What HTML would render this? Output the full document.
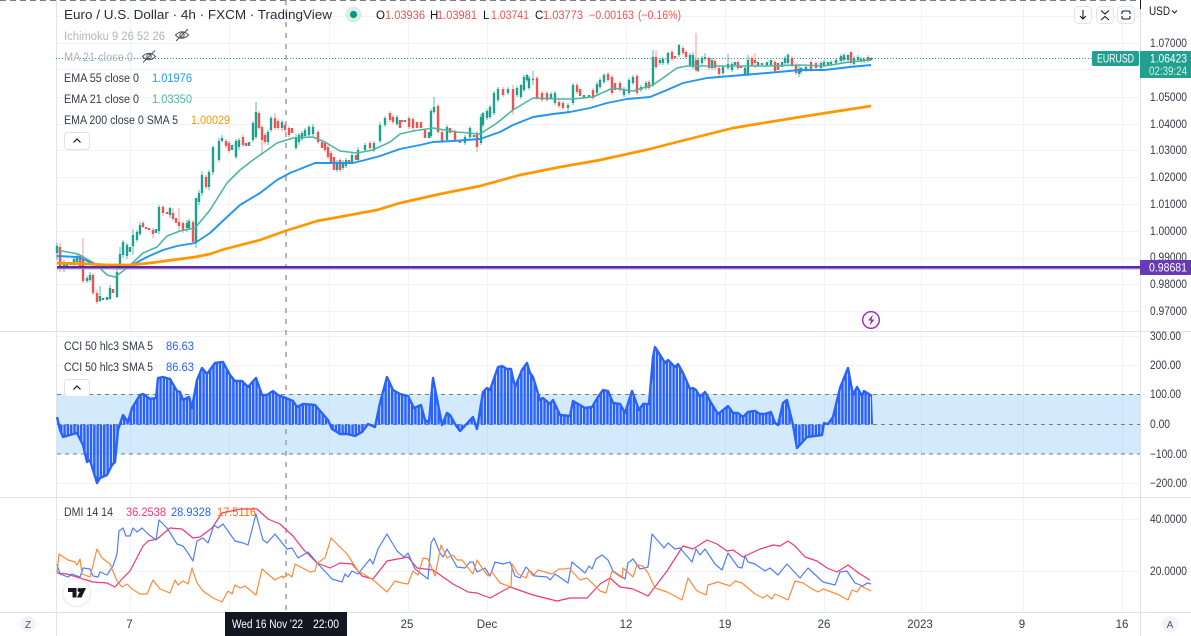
<!DOCTYPE html>
<html><head><meta charset="utf-8"><style>
html,body{margin:0;padding:0;background:#fff;width:1191px;height:636px;overflow:hidden}
svg{display:block;filter:blur(.3px)}
text{font-family:"Liberation Sans",sans-serif;font-size:11.5px;fill:#131722}
.ax text{fill:#363a45;font-size:11.5px}
</style></head><body>
<svg width="1191" height="636" viewBox="0 0 1191 636" xmlns="http://www.w3.org/2000/svg">
<defs>
<pattern id="bars" x="56.7" y="0" width="3.31" height="10" patternUnits="userSpaceOnUse"><rect width="2.6" height="10" fill="#2962ff"/><rect x="2.6" width=".71" height="10" fill="#fff" opacity=".55"/></pattern>
</defs>
<rect width="1191" height="636" fill="#fff"/>
<!-- grid -->
<path fill="none" stroke="#f0f3fa" stroke-width="1" d="M130.5 0V612M229.5 0V612M329.5 0V612M408.5 0V612M487.5 0V612M626.5 0V612M725.5 0V612M824.5 0V612M921.5 0V612M1023.5 0V612M1122.5 0V612
M56 16.5H1140M56 43.5H1140M56 69.5H1140M56 97.5H1140M56 124.5H1140M56 150.5H1140M56 177.5H1140M56 204.5H1140M56 231.5H1140M56 258.5H1140M56 284.5H1140M56 311.5H1140
M56 336.5H1140M56 365.5H1140M56 394.5H1140M56 483.5H1140
M56 519.5H1140M56 571.5H1140"/>
<!-- CCI band -->
<rect x="57" y="394.5" width="1083" height="59.5" fill="#2196f3" opacity=".2"/>
<!-- separators -->
<path fill="none" stroke="#e0e3eb" stroke-width="1" d="M56.5 0V636M1140.5 0V636M0 331.5H1191M0 497.5H1191M0 612.5H1191"/>
<!-- top dashed -->
<path stroke="#787b86" stroke-width="1" stroke-dasharray="6 4" d="M0 .5H1140"/>
<path stroke="#131722" stroke-width="1" d="M1140.5 0V9"/>
<!-- crosshair -->
<path stroke="#9598a1" stroke-width="1.4" stroke-dasharray="5 6" d="M286 0V612"/>
<!-- last price dotted -->
<path stroke="#22a08f" stroke-width="1" stroke-dasharray="1 2" d="M56 58.5H1092"/>
<!-- wicks -->
<g fill="none" stroke-width="1">
<path stroke="#22a08f" opacity=".75" d="M57 243V260M64 260V272M74 257V267M77 253V265M87 276V283M90 272V282M100 286V302M110 285V300M117 268V298M120 247V270M123 240V258M127 243V259M133 229V255M137 230V242M140 222V236M159 205V234M170 207V218M187 220V232M189 219V230M196 198V248M199 190V205M202 171V196M209 170V190M213 146V175M219 138V162M222 135V142M236 139V159M239 138V150M253 121V142M256 102V139M268 130V145M271 116V132M282 120V131M296 134V150M299 133V145M302 131V141M305 128V138M309 125V137M313 124V136M337 160V172M343 160V170M346 158V168M352 153V164M358 147V161M365 143V152M374 141V152M380 122V143M385 116V127M397 115V126M431 109V138M434 97V114M447 125V142M465 135V145M470 126V139M481 114V145M483 112V127M487 109V120M490 105V119M494 91V115M498 87V102M508 87V95M517 86V97M521 84V99M524 75V92M527 74V82M529 76V90M533 71V85M551 92V98M555 91V105M568 103V112M573 83V105M597 82V95M600 78V89M604 73V84M624 87V97M629 78V95M633 75V85M641 85V92M646 81V90M653 50V87M660 58V65M663 57V65M668 52V65M679 44V57M690 53V67M693 52V69M698 58V72M702 56V65M705 53V61M712 58V70M723 65V75M728 54V70M732 62V72M745 66V76M748 55V76M785 56V65M788 53V65M799 65V77M801 67V74M806 65V72M821 61V70M824 60V67M831 60V66M836 58V65M841 54V63M844 53V62M848 54V62M854 56V67M858 55V62M861 57V63M864 57V63M871 57V61"/>
<path stroke="#ef5350" opacity=".6" d="M60 243V272M83 238V283M93 273V295M97 290V304M143 221V228M153 228V238M163 205V216M173 208V221M179 208V232M183 221V233M193 220V244M206 175V189M226 139V148M229 141V153M243 135V147M259 111V130M262 125V155M265 133V144M275 113V130M278 119V130M285 123V132M289 126V137M318 130V144M325 141V152M328 145V159M331 151V164M340 158V172M370 141V150M390 111V122M393 115V124M409 116V129M413 117V130M438 104V134M442 130V143M455 130V142M477 131V152M503 87V97M513 85V115M537 76V100M542 91V102M547 91V102M559 100V108M563 101V110M577 83V94M593 88V100M608 72V82M612 75V95M620 81V92M637 74V95M649 80V90M656 50V69M672 50V61M683 46V55M686 50V59M696 33V72M709 56V70M715 59V70M719 66V76M738 60V70M752 56V67M755 53V68M775 60V73M792 56V67M796 63V75M811 60V72M816 61V69M851 52V65M868 55V63"/>
</g>
<!-- bodies green -->
<path fill="none" stroke="#1ea08e" stroke-width="2.4" d="M57 246V253M64 262V267M67 263V266M74 259V265M77 256V262M87 278V281M90 275V280M100 296V301M103 298V300M107 297V300M110 288V299M117 272V297M120 254V267M123 242V255M127 245V256M130 247V252M133 235V246M137 232V240M140 225V234M156 229V233M159 207V231M170 208V215M187 223V228M189 221V228M196 198V243M199 193V202M202 175V193M209 172V187M213 147V172M219 141V160M222 138V141M232 145V150M236 141V157M239 140V147M249 142V146M253 123V140M256 112V137M268 132V142M271 118V130M282 122V128M296 137V148M299 135V142M302 133V139M305 130V136M309 127V135M313 127V134M337 163V170M343 163V168M346 160V166M352 155V162M358 150V160M365 145V150M374 143V150M380 125V141M385 118V125M397 117V124M405 120V122M429 132V138M431 111V136M434 107V112M447 127V140M465 137V143M470 128V137M474 135V137M481 117V143M483 113V125M487 111V118M490 107V117M494 93V113M498 89V100M508 89V93M517 88V95M521 85V97M524 77V90M527 75V80M529 78V88M533 79V80M551 94V98M555 93V103M568 105V108M573 85V103M584 95V98M589 95V98M597 84V93M600 80V87M604 75V82M624 89V95M629 80V93M633 77V83M641 87V90M646 83V88M653 57V85M660 60V63M663 59V63M668 53V63M679 45V55M690 55V65M693 55V67M698 60V71M702 58V63M705 57V59M712 60V68M723 67V73M728 64V68M732 64V70M735 62V65M745 68V74M748 60V74M758 62V66M762 63V65M767 62V66M771 60V65M782 62V67M785 58V63M788 55V63M799 69V74M801 68V72M806 67V70M821 63V68M824 62V65M828 62V65M831 62V64M836 60V63M841 56V61M844 55V60M848 55V60M854 58V64M858 57V60M861 59V61M864 59V61M871 58V60"/>
<!-- bodies red -->
<path fill="none" stroke="#ef5350" stroke-width="2.4" d="M60 247V268M71 262V265M80 255V266M83 260V281M93 275V293M97 293V302M113 289V293M143 223V227M146 227V229M149 228V230M153 230V234M163 207V213M167 212V214M173 213V219M176 218V223M179 222V226M183 223V231M193 222V242M206 177V187M226 141V146M229 143V151M243 137V145M246 143V146M259 113V128M262 127V140M265 135V142M275 118V128M278 121V128M285 125V130M289 128V135M292 128V133M318 132V142M322 142V148M325 143V150M328 147V157M331 153V162M334 157V170M340 160V170M349 160V163M356 155V160M370 143V148M390 113V120M393 117V122M400 120V128M402 120V122M409 118V127M413 119V128M417 122V128M421 122V128M425 130V138M438 106V132M442 132V141M450 128V133M455 132V140M460 140V143M477 133V147M503 89V95M513 89V110M537 78V98M542 93V100M547 93V100M559 102V106M563 103V108M577 85V92M580 89V96M593 90V98M608 74V80M612 77V93M615 83V90M620 83V90M637 76V93M649 82V88M656 57V67M672 52V59M675 56V58M683 48V53M686 52V57M696 60V70M709 58V68M715 61V68M719 68V74M738 62V68M741 66V68M752 58V65M755 60V63M775 62V71M778 63V70M792 58V65M796 65V73M811 62V70M816 63V68M851 52V63M868 57V61"/>
<!-- EMA lines -->
<polyline fill="none" stroke="#4db6a0" stroke-width="1.6" stroke-linejoin="round" points="57,250 62,251 78,254 97,265 107,275 115,277 127,268 143,253 157,247 167,236 180,231 195,228 210,210 227,183 240,170 253,160 263,153 277,143 293,138 313,137 325,142 340,151 357,153 373,150 390,142 400,134 413,131 433,128 457,132 480,134 497,123 513,110 533,98 557,99 573,99 593,97 613,88 633,91 653,85 677,68 687,66 717,66 750,66 767,66 800,65 824,66 850,62 871,60"/>
<polyline fill="none" stroke="#2196f3" stroke-width="1.9" stroke-linejoin="round" points="57,256 78,257 97,265 107,266 117,266 132,265 147,257 163,250 177,246 195,243 210,233 227,217 240,205 260,193 277,180 290,173 315,163 333,163 353,163 365,160 380,156 400,149 420,145 433,142 453,141 480,139 500,132 513,125 533,117 553,114 570,112 590,108 607,103 627,99 650,97 667,90 683,83 707,78 743,75 767,73 800,70 824,70 850,67 871,65"/>
<polyline fill="none" stroke="#ff9800" stroke-width="2.7" stroke-linejoin="round" points="57,263 90,264 107,265 130,265 150,263 165,261 195,257 210,254 225,249 260,240 285,231 317,221 350,215 377,210 400,203 440,194 480,186 520,175 560,167 600,160 650,149 677,142 733,128 800,117 871,106"/>
<!-- purple line -->
<rect x="57" y="266" width="1083" height="2.4" fill="#5a2aa5"/>
<rect x="57" y="268.4" width="1083" height="1" fill="#a98fd6"/>
<!-- lightning -->
<circle cx="871" cy="320" r="8.3" fill="#fff" stroke="#9c27b0" stroke-width="1.4"/>
<path fill="#9c27b0" d="M873 314.5L868 320.5H871L869.5 325.5L874.5 319.5H871.5Z"/>
<!-- CCI -->
<path fill="none" stroke="#787b86" stroke-width="1" stroke-dasharray="4 4" d="M57 394.5H1140M57 424.5H1140M57 454H1140"/>
<polygon fill="url(#bars)" points="57,424.5 57,417 60,430 63,437 77,433 83,445 87,462 90,460 97,483 100,478 107,475 112,465 115,462 118,430 123,415 128,422 132,408 140,395 143,394 150,399 156,398 158,378 163,377 170,379 177,391 180,392 183,400 189,397 192,408 197,380 202,368 207,374 215,363 223,362 230,375 235,381 242,381 248,387 256,378 262,395 267,395 273,391 278,395 293,401 297,407 303,404 315,405 322,413 328,420 332,429 340,434 347,434 355,436 362,432 368,424 375,427 380,403 387,377 393,390 400,394 408,396 414,408 421,405 425,420 429,422 433,378 442,425 447,413 450,415 455,424 460,431 473,417 477,429 483,392 487,388 490,390 498,367 502,366 507,369 511,369 515,387 522,370 527,363 530,373 533,377 540,400 543,398 550,404 553,400 560,415 570,416 573,401 585,408 592,407 598,397 603,390 608,391 613,403 620,404 625,413 632,391 639,410 643,404 649,404 653,357 655,347 662,358 665,363 668,360 675,367 678,364 683,373 690,389 693,388 696,390 700,397 705,392 710,401 718,414 728,406 733,413 738,413 743,417 748,412 755,411 760,414 765,414 771,412 775,423 778,425 783,403 787,400 793,425 797,448 807,437 822,435 824,423 828,424 833,417 840,388 848,368 853,395 857,387 862,396 864,391 872,396 873,424.5"/>
<polyline fill="none" stroke="#2962ff" stroke-width="2.4" stroke-linejoin="round" points="57,417 60,430 63,437 77,433 83,445 87,462 90,460 97,483 100,478 107,475 112,465 115,462 118,430 123,415 128,422 132,408 140,395 143,394 150,399 156,398 158,378 163,377 170,379 177,391 180,392 183,400 189,397 192,408 197,380 202,368 207,374 215,363 223,362 230,375 235,381 242,381 248,387 256,378 262,395 267,395 273,391 278,395 293,401 297,407 303,404 315,405 322,413 328,420 332,429 340,434 347,434 355,436 362,432 368,424 375,427 380,403 387,377 393,390 400,394 408,396 414,408 421,405 425,420 429,422 433,378 442,425 447,413 450,415 455,424 460,431 473,417 477,429 483,392 487,388 490,390 498,367 502,366 507,369 511,369 515,387 522,370 527,363 530,373 533,377 540,400 543,398 550,404 553,400 560,415 570,416 573,401 585,408 592,407 598,397 603,390 608,391 613,403 620,404 625,413 632,391 639,410 643,404 649,404 653,357 655,347 662,358 665,363 668,360 675,367 678,364 683,373 690,389 693,388 696,390 700,397 705,392 710,401 718,414 728,406 733,413 738,413 743,417 748,412 755,411 760,414 765,414 771,412 775,423 778,425 783,403 787,400 793,425 797,448 807,437 822,435 824,423 828,424 833,417 840,388 848,368 853,395 857,387 862,396 864,391 872,396"/>
<!-- DMI -->
<polyline fill="none" stroke="#f23674" stroke-width="1.2" stroke-linejoin="round" points="57,573 67,574 80,578 93,582 107,583 115,587 122,579 130,571 143,546 148,541 157,539 170,528 182,529 193,538 200,537 212,528 222,513 240,509 257,509 268,519 280,524 293,536 303,549 317,563 330,568 340,563 352,564 362,576 373,579 387,561 408,557 417,568 433,570 453,584 468,592 477,593 490,598 510,587 533,595 557,601 570,598 587,598 600,584 610,578 620,587 633,589 648,596 667,571 683,546 693,549 707,540 717,544 727,551 733,550 743,557 760,549 773,545 780,546 788,541 795,546 805,557 817,561 827,568 837,572 848,565 860,574 870,580"/>
<polyline fill="none" stroke="#4f7dff" stroke-width="1.2" stroke-linejoin="round" points="57,564 60,574 68,577 72,574 80,577 83,568 90,569 93,576 98,577 100,572 107,575 113,566 117,554 119,531 123,528 126,536 130,536 133,528 137,532 142,528 148,534 156,540 159,520 167,528 177,544 183,546 188,553 193,561 197,541 203,538 208,543 214,525 218,528 223,524 235,541 243,543 248,545 256,514 263,540 267,543 275,534 287,549 292,548 298,558 308,552 320,566 332,579 342,582 345,574 348,577 352,571 358,574 370,559 373,564 378,549 387,534 397,551 404,557 408,553 415,569 428,579 431,543 434,538 440,553 443,557 447,549 457,567 465,568 470,562 473,562 477,572 485,568 490,576 495,562 503,564 510,562 515,576 520,578 526,567 535,576 547,577 550,580 555,574 568,583 572,562 585,573 589,566 592,569 596,559 602,555 608,560 613,571 625,579 628,563 633,559 640,569 648,567 652,534 658,541 664,548 668,543 675,549 680,548 692,562 696,549 700,555 705,549 715,564 722,570 728,553 738,567 742,568 745,556 748,562 755,564 765,571 770,568 778,575 787,564 800,578 808,568 823,582 835,585 840,572 847,571 855,583 863,586 867,583 871,584"/>
<polyline fill="none" stroke="#ff8a3a" stroke-width="1.2" stroke-linejoin="round" points="57,573 59,554 68,560 75,562 77,565 80,559 82,574 90,577 97,549 102,558 110,564 117,581 122,587 127,584 132,589 140,594 147,594 153,580 160,589 170,593 175,580 178,585 183,581 188,584 192,568 197,583 203,591 213,598 222,602 228,591 232,594 235,585 240,588 245,586 256,595 262,569 275,580 282,576 283,578 288,574 292,577 295,564 310,572 315,571 317,563 325,558 331,538 347,554 358,571 372,579 387,592 395,581 402,583 408,584 413,571 418,575 423,558 428,559 435,576 441,545 447,558 453,555 457,560 462,560 473,574 477,560 482,568 488,576 492,572 500,583 511,587 512,564 518,574 526,578 529,570 533,576 538,570 552,574 559,569 565,569 569,568 580,580 587,578 600,591 606,593 612,571 622,578 623,568 633,577 637,565 643,566 648,573 655,588 667,592 673,595 682,600 688,578 697,591 706,595 708,585 718,582 730,586 735,581 742,583 755,594 763,598 767,595 772,599 775,594 788,600 795,581 803,583 812,589 818,592 823,589 837,594 848,600 852,590 857,592 861,586 871,591"/>
<!-- TV logo -->
<circle cx="76.7" cy="592.7" r="14" fill="#fff" stroke="#e9ebef" stroke-width="1.2"/>
<path fill="#131722" d="M68 588H76.5V597.5H72.5V592H68ZM86 588L81.5 597.5H77L81.5 588Z"/><circle cx="79.5" cy="590" r="2" fill="#131722"/>
<!-- legends -->
<text x="64" y="19" style="font-size:13px;fill:#2a2e39" textLength="268" lengthAdjust="spacingAndGlyphs">Euro / U.S. Dollar · 4h · FXCM · TradingView</text>
<circle cx="353.5" cy="14.5" r="8" fill="#d9eee9"/><circle cx="353.5" cy="14.5" r="3.6" fill="#089981"/>
<g>
<text x="376" y="19">O</text><text x="385" y="19" textLength="40" lengthAdjust="spacingAndGlyphs" style="fill:#ef5350">1.03936</text>
<text x="430" y="19">H</text><text x="437" y="19" textLength="40" lengthAdjust="spacingAndGlyphs" style="fill:#ef5350">1.03981</text>
<text x="483" y="19">L</text><text x="491" y="19" textLength="38" lengthAdjust="spacingAndGlyphs" style="fill:#ef5350">1.03741</text>
<text x="535" y="19">C</text><text x="543" y="19" textLength="40" lengthAdjust="spacingAndGlyphs" style="fill:#ef5350">1.03773</text>
<text x="589" y="19" textLength="45" lengthAdjust="spacingAndGlyphs" style="fill:#ef5350">−0.00163</text>
<text x="638" y="19" textLength="43" lengthAdjust="spacingAndGlyphs" style="fill:#ef5350">(−0.16%)</text>
</g>
<text x="64" y="40" textLength="101" lengthAdjust="spacingAndGlyphs" style="fill:#b2b5be">Ichimoku 9 26 52 26</text>
<text x="64" y="61" textLength="69" lengthAdjust="spacingAndGlyphs" style="fill:#b2b5be">MA 21 close 0</text>
<g fill="none" stroke="#131722" stroke-width="1" opacity=".75">
<path d="M175.5 35Q182 28.5 188.5 35Q182 41.5 175.5 35Z"/><circle cx="182" cy="35" r="2.2"/><path d="M176 41L188 29"/>
<path d="M142.5 56.5Q149 50 155.5 56.5Q149 63 142.5 56.5Z"/><circle cx="149" cy="56.5" r="2.2"/><path d="M143 62.5L155 50.5"/>
</g>
<text x="64" y="82" textLength="75" lengthAdjust="spacingAndGlyphs" style="fill:#363a45">EMA 55 close 0</text><text x="152" y="82" textLength="40" lengthAdjust="spacingAndGlyphs" style="fill:#2196f3">1.01976</text>
<text x="64" y="103" textLength="75" lengthAdjust="spacingAndGlyphs" style="fill:#363a45">EMA 21 close 0</text><text x="152" y="103" textLength="40" lengthAdjust="spacingAndGlyphs" style="fill:#4db6a0">1.03350</text>
<text x="64" y="124" textLength="114" lengthAdjust="spacingAndGlyphs" style="fill:#363a45">EMA 200 close 0 SMA 5</text><text x="191" y="124" textLength="39" lengthAdjust="spacingAndGlyphs" style="fill:#ff9800">1.00029</text>
<rect x="64.5" y="132.5" width="25" height="17" rx="3" fill="#fff" stroke="#e0e3eb"/><path d="M73.5 142.5L77 139L80.5 142.5" fill="none" stroke="#131722" stroke-width="1.2"/>
<text x="64" y="350" textLength="89" lengthAdjust="spacingAndGlyphs" style="fill:#363a45">CCI 50 hlc3 SMA 5</text><text x="166" y="350" textLength="28" lengthAdjust="spacingAndGlyphs" style="fill:#2962ff">86.63</text>
<text x="64" y="371" textLength="89" lengthAdjust="spacingAndGlyphs" style="fill:#363a45">CCI 50 hlc3 SMA 5</text><text x="166" y="371" textLength="28" lengthAdjust="spacingAndGlyphs" style="fill:#2962ff">86.63</text>
<rect x="64.5" y="379.5" width="25" height="17" rx="3" fill="#fff" stroke="#e0e3eb"/><path d="M73.5 389.5L77 386L80.5 389.5" fill="none" stroke="#131722" stroke-width="1.2"/>
<text x="64" y="516" textLength="49" lengthAdjust="spacingAndGlyphs" style="fill:#363a45">DMI 14 14</text>
<text x="126" y="516" textLength="40" lengthAdjust="spacingAndGlyphs" style="fill:#f23674">36.2538</text><text x="171" y="516" textLength="40" lengthAdjust="spacingAndGlyphs" style="fill:#2962ff">28.9328</text><text x="217" y="516" textLength="39" lengthAdjust="spacingAndGlyphs" style="fill:#ff6d00">17.5116</text>
<!-- top right buttons -->
<g fill="#fff" stroke="#e0e3eb"><rect x="1074.5" y="6.5" width="17" height="17" rx="4"/><rect x="1096.5" y="6.5" width="17" height="17" rx="4"/><rect x="1117.5" y="6.5" width="17" height="17" rx="4"/></g>
<g fill="none" stroke="#131722" stroke-width="1.1"><path d="M1083 10V19M1080 16L1083 19L1086 16"/><path d="M1101 10.5L1105 14L1109 10.5M1101 20L1105 16.5L1109 20"/><path d="M1122 14V12.5Q1122 11 1123.5 11H1128.5Q1130 11 1130 12.5V14M1122 16V17.5Q1122 19 1123.5 19H1128.5Q1130 19 1130 17.5V16"/></g>
<!-- right axis -->
<g class="ax">
<text x="1149" y="15" textLength="21" lengthAdjust="spacingAndGlyphs" style="fill:#131722">USD</text>
<path d="M1172 10.5L1174.5 13L1177 10.5" fill="none" stroke="#131722"/>
<text x="1150" y="47" textLength="37" lengthAdjust="spacingAndGlyphs">1.07000</text>
<text x="1150" y="101" textLength="37" lengthAdjust="spacingAndGlyphs">1.05000</text>
<text x="1150" y="128" textLength="37" lengthAdjust="spacingAndGlyphs">1.04000</text>
<text x="1150" y="154" textLength="37" lengthAdjust="spacingAndGlyphs">1.03000</text>
<text x="1150" y="181" textLength="37" lengthAdjust="spacingAndGlyphs">1.02000</text>
<text x="1150" y="208" textLength="37" lengthAdjust="spacingAndGlyphs">1.01000</text>
<text x="1150" y="235" textLength="37" lengthAdjust="spacingAndGlyphs">1.00000</text>
<text x="1150" y="261" textLength="37" lengthAdjust="spacingAndGlyphs">0.99000</text>
<text x="1150" y="288" textLength="37" lengthAdjust="spacingAndGlyphs">0.98000</text>
<text x="1150" y="315" textLength="37" lengthAdjust="spacingAndGlyphs">0.97000</text>
<text x="1150" y="340" textLength="31" lengthAdjust="spacingAndGlyphs">300.00</text>
<text x="1150" y="369" textLength="31" lengthAdjust="spacingAndGlyphs">200.00</text>
<text x="1150" y="398" textLength="31" lengthAdjust="spacingAndGlyphs">100.00</text>
<text x="1150" y="428" textLength="20" lengthAdjust="spacingAndGlyphs">0.00</text>
<text x="1150" y="458" textLength="37" lengthAdjust="spacingAndGlyphs">−100.00</text>
<text x="1150" y="487" textLength="37" lengthAdjust="spacingAndGlyphs">−200.00</text>
<text x="1150" y="523" textLength="37" lengthAdjust="spacingAndGlyphs">40.0000</text>
<text x="1150" y="575" textLength="37" lengthAdjust="spacingAndGlyphs">20.0000</text>
</g>
<rect x="1092" y="51" width="47" height="15" rx="1.5" fill="#22a08f"/>
<text x="1097" y="62.5" textLength="37" lengthAdjust="spacingAndGlyphs" style="fill:#fff">EURUSD</text>
<rect x="1140" y="51" width="51" height="27" fill="#22a08f"/>
<text x="1150" y="62.5" textLength="37" lengthAdjust="spacingAndGlyphs" style="fill:#fff">1.06423</text>
<text x="1149" y="75" textLength="38" lengthAdjust="spacingAndGlyphs" style="fill:#d6f0ec">02:39:24</text>
<rect x="1140" y="260" width="51" height="15" fill="#673ab7"/>
<text x="1149" y="271.5" textLength="38" lengthAdjust="spacingAndGlyphs" style="fill:#fff">0.98681</text>
<!-- time axis -->
<g class="ax" text-anchor="middle">
<text x="129.5" y="628">7</text>
<text x="407" y="628">25</text>
<text x="487" y="628">Dec</text>
<text x="626" y="628">12</text>
<text x="725" y="628">19</text>
<text x="824" y="628">26</text>
<text x="920" y="628">2023</text>
<text x="1022" y="628">9</text>
<text x="1122" y="628">16</text>
</g>
<rect x="225" y="612" width="122" height="24" fill="#131722"/>
<text x="232" y="628" textLength="71" lengthAdjust="spacingAndGlyphs" style="fill:#fff">Wed 16 Nov '22</text>
<text x="313" y="628" textLength="26" lengthAdjust="spacingAndGlyphs" style="fill:#fff">22:00</text>
<circle cx="28" cy="624" r="8" fill="#f0f3fa"/><text x="28" y="628" text-anchor="middle" style="fill:#50535e;font-size:10px">Z</text>
<circle cx="1170" cy="624" r="8" fill="#f0f3fa"/><text x="1170" y="628" text-anchor="middle" style="fill:#50535e;font-size:10px">A</text>
</svg>
</body></html>
